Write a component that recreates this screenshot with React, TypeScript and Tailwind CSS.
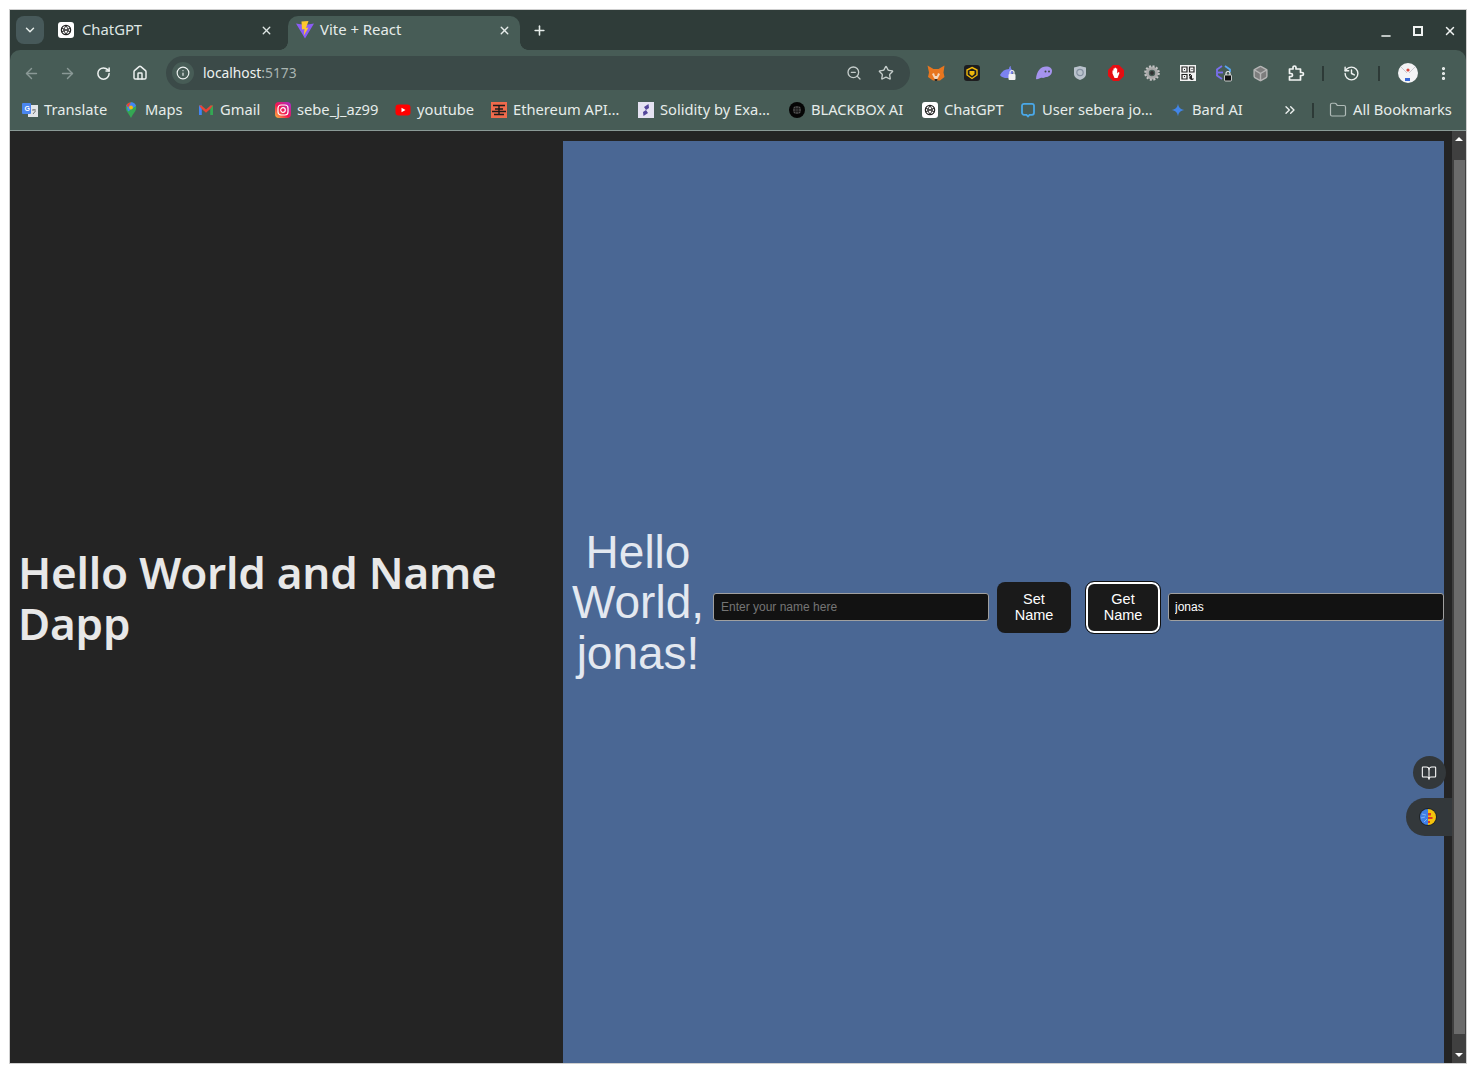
import { ArrowLeft, ArrowRight, RotateCw, Home, Info, ZoomOut, Star, History, EllipsisVertical, X, Plus, ChevronDown, ChevronsRight, Folder, Minus, BookOpen, Box } from "lucide-react";

const chromeFont = "font-['Noto_Sans',sans-serif]";

function GptIcon({ size = 16 }: { size?: number }) {
  return (
    <svg width={size} height={size} viewBox="0 0 16 16" className="shrink-0">
      <rect width="16" height="16" rx="3" fill="#fff" />
      <circle cx="8" cy="8" r="4.6" fill="none" stroke="#222" strokeWidth="1.3" />
      <path d="M8 3.4 5.5 8 8 12.6 10.5 8Z M3.6 6 12.4 10 M3.6 10 12.4 6" fill="none" stroke="#222" strokeWidth="0.9" />
    </svg>
  );
}

function ViteIcon() {
  return (
    <svg width="18" height="18" viewBox="0 0 18 18" className="shrink-0">
      <path d="M0 2.500 9 4 18 2.500 9 17.500Z" fill="#8b5cf6" />
      <path d="M5.500 0.500 12.500 0 10 7 12.500 6.500 7.800 14.500 8.500 8 6 8.500Z" fill="#fdc82c" />
    </svg>
  );
}

function Bookmark({ icon, label }: { icon: React.ReactNode; label: string }) {
  return (
    <div className="flex items-center gap-[6px] shrink-0">
      <span className="flex w-4 h-4 items-center justify-center shrink-0">{icon}</span>
      <span className="-mt-[2px] text-[14.700px] leading-none text-[#e6ecea] whitespace-nowrap">{label}</span>
    </div>
  );
}

const bookmarks: { label: string; icon: React.ReactNode; width: string }[] = [
  {
    label: "Translate",
    width: "w-[101px]",
    icon: (
      <svg width="16" height="16" viewBox="0 0 16 16">
        <rect x="6" y="3" width="10" height="12" fill="#e3e5e8" />
        <rect x="0" y="1" width="9" height="11" rx="1" fill="#4a86f0" />
        <text x="2.500" y="9" fontSize="7" fill="#fff" fontFamily="Liberation Sans" fontWeight="700">G</text>
        <path d="M10 8h4M12 7v1M11 12l2.500-3" stroke="#666" strokeWidth="0.9" fill="none" />
      </svg>
    ),
  },
  {
    label: "Maps",
    width: "w-[75px]",
    icon: (
      <svg width="16" height="16" viewBox="0 0 16 16">
        <path d="M8 16C6 11.500 2.800 9.500 2.800 5.500a5.200 5.200 0 0 1 10.400 0C13.200 9.500 10 11.500 8 16Z" fill="#34a853" />
        <path d="M3.400 3 8 .3a5.200 5.200 0 0 1 5 3.700L5 9.500Z" fill="#4285f4" />
        <path d="M3.400 3A5.200 5.200 0 0 1 8 .3L5 5.500Z" fill="#ea4335" />
        <circle cx="8" cy="5.500" r="1.900" fill="#fbbc04" />
      </svg>
    ),
  },
  {
    label: "Gmail",
    width: "w-[77px]",
    icon: (
      <svg width="16" height="16" viewBox="0 0 16 16">
        <path d="M1 3.500h2.800V13H1Z" fill="#4285f4" />
        <path d="M12.200 3.500H15V13h-2.800Z" fill="#34a853" />
        <path d="M1 3.500h2.500L8 7.500l4.500-4H15L12.200 7 8 10.800 3.800 7Z" fill="#ea4335" />
      </svg>
    ),
  },
  {
    label: "sebe_j_az99",
    width: "w-[120px]",
    icon: (
      <svg width="16" height="16" viewBox="0 0 16 16">
        <defs>
          <linearGradient id="ig" x1="0" y1="1" x2="1" y2="0">
            <stop offset="0" stopColor="#fdc13a" />
            <stop offset="0.45" stopColor="#f3154e" />
            <stop offset="1" stopColor="#a52fd0" />
          </linearGradient>
        </defs>
        <rect width="16" height="16" rx="4" fill="url(#ig)" />
        <rect x="3" y="3" width="10" height="10" rx="3" fill="none" stroke="#fff" strokeWidth="1.200" />
        <circle cx="8" cy="8" r="2.300" fill="none" stroke="#fff" strokeWidth="1.200" />
      </svg>
    ),
  },
  {
    label: "youtube",
    width: "w-[96px]",
    icon: (
      <svg width="16" height="16" viewBox="0 0 16 16">
        <rect x="0.500" y="2.500" width="15" height="11" rx="3" fill="#f00" />
        <path d="M6.500 5.700v4.600L10.500 8Z" fill="#fff" />
      </svg>
    ),
  },
  {
    label: "Ethereum API…",
    width: "w-[147px]",
    icon: (
      <svg width="16" height="16" viewBox="0 0 16 16">
        <rect width="16" height="16" fill="#ef6a4c" />
        <path d="M2 3.500h12M4 7h8M1 9.500h14M8 3.500v9M3 12.500h10" stroke="#1b1b1b" strokeWidth="1.400" fill="none" />
      </svg>
    ),
  },
  {
    label: "Solidity by Exa…",
    width: "w-[151px]",
    icon: (
      <svg width="16" height="16" viewBox="0 0 16 16">
        <rect width="16" height="16" fill="#e5e2f2" />
        <path d="M10.500 2 6 5l2 3 3-2ZM5.500 14l4.500-3-2-3-3 2Z" fill="#53459a" />
      </svg>
    ),
  },
  {
    label: "BLACKBOX AI",
    width: "w-[133px]",
    icon: (
      <svg width="16" height="16" viewBox="0 0 16 16">
        <circle cx="8" cy="8" r="8" fill="#050505" />
        <circle cx="8" cy="8" r="4" fill="#555" />
        <path d="M4 6.500h8M4 8h8M4 9.500h8M6.500 4v8M8 4v8M9.500 4v8" stroke="#111" strokeWidth="0.600" />
      </svg>
    ),
  },
  { label: "ChatGPT", width: "w-[98px]", icon: <GptIcon /> },
  {
    label: "User sebera jo…",
    width: "w-[150px]",
    icon: (
      <svg width="16" height="16" viewBox="0 0 16 16">
        <path d="M4 1.800h8A2 2 0 0 1 14 3.800v7a2 2 0 0 1-2 2H9.500L8 14.500 6.500 12.800H4a2 2 0 0 1-2-2v-7a2 2 0 0 1 2-2Z" fill="none" stroke="#4aa8e8" strokeWidth="1.800" />
      </svg>
    ),
  },
  {
    label: "Bard AI",
    width: "w-[90px]",
    icon: (
      <svg width="16" height="16" viewBox="0 0 16 16">
        <path d="M8 1.500C8.600 5.600 10.400 7.400 14.500 8 10.400 8.600 8.600 10.400 8 14.500 7.400 10.400 5.600 8.600 1.500 8 5.600 7.400 7.400 5.600 8 1.500Z" fill="#4285e8" />
      </svg>
    ),
  },
];

const extensions: React.ReactNode[] = [
  <svg key="fox" width="18" height="18" viewBox="0 0 18 18">
    <path d="M0.500 1.500 6.500 5h5l6-3.500-1 7 1 4.500-4.500 3.500h-7L1 13l1-4.500Z" fill="#e8761f" />
    <path d="M5 10l2-1 1 3h2l1-3 2 1-2 4-1.500 2h-1L7 14Z" fill="#f5d6ba" />
    <path d="M7.500 15h3l-.5 2h-2Z" fill="#2a2a2a" />
  </svg>,
  <svg key="bnb" width="16" height="16" viewBox="0 0 16 16">
    <rect width="16" height="16" rx="3" fill="#1d1d1f" />
    <path d="M8 2.500 13 5v5l-5 3.500L3 10V5Z" fill="none" stroke="#f0b90b" strokeWidth="1.400" />
    <path d="M5.500 6h5v3l-2.500 2-2.500-2Z" fill="#f0b90b" />
  </svg>,
  <svg key="lock-bird" width="18" height="18" viewBox="0 0 18 18">
    <path d="M1 11c2-4 5-6 9-6 0-2 1-3 2-3-1 2 1 3 2 6l-2 6H6C4 13 2 13 1 11Z" fill="#7c83f0" />
    <rect x="9.500" y="10" width="7" height="6" rx="1" fill="#f2f2f2" />
    <path d="M11 10V8.500a2 2 0 0 1 4 0V10" stroke="#f2f2f2" strokeWidth="1.200" fill="none" />
  </svg>,
  <svg key="ghost" width="18" height="18" viewBox="0 0 18 18">
    <path d="M1 15C1.500 7 6 2.500 11 2.500c4 0 6 2 6 4.500 0 3.500-3 6-6 6-1 0-1.500 1-3 1-1 0-1.500-.5-2.500 0-1.500.8-3 1.500-4.500 1Z" fill="#a593ee" />
    <circle cx="10.500" cy="7.500" r="1" fill="#3e4a48" />
    <circle cx="14" cy="7.500" r="1" fill="#3e4a48" />
  </svg>,
  <svg key="shield" width="16" height="16" viewBox="0 0 16 16">
    <path d="M2 2.500 8 1l6 1.500V9c0 3-3 5-6 6-3-1-6-3-6-6Z" fill="#b9c2cc" />
    <circle cx="8" cy="7.500" r="3.200" fill="none" stroke="#8490a0" strokeWidth="1.200" />
  </svg>,
  <svg key="stop" width="16" height="16" viewBox="0 0 16 16">
    <path d="M5 0h6l5 5v6l-5 5H5l-5-5V5Z" fill="#e60d12" />
    <path d="M4.500 8.500V5.500h1V8V3.500h1.200V8V2.800h1.300V8V3.500h1.200V8.500l1.300-1.500 1 .7L9.500 13H6.500Z" fill="#fff" />
  </svg>,
  <svg key="gear" width="16" height="16" viewBox="0 0 16 16">
    <circle cx="8" cy="8" r="4.800" fill="none" stroke="#a8a8a8" strokeWidth="3.200" />
    <circle cx="8" cy="8" r="6.800" fill="none" stroke="#c4c4c4" strokeWidth="2" strokeDasharray="2 1.600" />
    <circle cx="8" cy="8" r="1.900" fill="#333" />
  </svg>,
  <svg key="qr" width="16" height="16" viewBox="0 0 16 16">
    <rect width="16" height="16" fill="#f2f2f2" />
    <path d="M2 2h5v5H2ZM9.500 2h4.500v5H9.500ZM2 9.500h5V14H2Z" fill="none" stroke="#222" strokeWidth="1.200" />
    <path d="M4 4h1v1H4ZM11.500 4h1v1h-1ZM4 11h1v1H4ZM9 9h2v2H9ZM12 10a2.500 2.500 0 1 0 2 3.500h-2Z" fill="#222" />
  </svg>,
  <svg key="eth-lock" width="18" height="18" viewBox="0 0 18 18">
    <path d="M7 2 2 5.500v6L7 15" fill="none" stroke="#7a6ff0" strokeWidth="1.800" />
    <path d="M3 8.500h5" stroke="#7a6ff0" strokeWidth="1.800" />
    <path d="M10 2l5 3.500V8" fill="none" stroke="#58a6f0" strokeWidth="1.800" />
    <rect x="9.500" y="11" width="7" height="6" rx="1" fill="#111" stroke="#eee" strokeWidth="0.800" />
    <path d="M11 11V9.500a2 2 0 0 1 4 0V11" stroke="#eee" strokeWidth="1.100" fill="none" />
  </svg>,
  <Box key="box" size={17} strokeWidth={2} className="text-[#b5b5b5]" fill="#7d7d7d" />,
  // chrome's extensions button
  <svg key="puzzle" width="18" height="18" viewBox="0 0 18 18">
    <path d="M2.500 5H6V3.500a1.500 1.500 0 0 1 3 0V5h4.500v3.500H15a1.500 1.500 0 0 1 0 3h-1.500V16H2.500v-3.500H4a1.500 1.500 0 0 0 0-3H2.500Z" fill="none" stroke="#f2f5f4" strokeWidth="1.700" strokeLinejoin="round" />
  </svg>,
];

function Hairline() {
  return <div className="w-[2px] h-[15px] bg-[#2d3a37]" />;
}

export default function App() {
  return (
    <div className={`h-[1073px] w-[1476px] bg-white p-[10px] overflow-hidden ${chromeFont}`}>
      <div className="flex h-full flex-col bg-[#2f3c39] outline outline-1 outline-[#cfcfcf]">
        {/* tab strip */}
        <div className="flex h-[40px] items-end pl-[6px]">
          <div className="mb-[6px] flex h-[28px] w-[28px] items-center justify-center rounded-lg bg-[#47595a]">
            <ChevronDown size={14} strokeWidth={2.5} className="text-[#e6ecea]" />
          </div>
          <div className="mb-[6px] ml-[14px] flex h-[28px] w-[224px] items-center">
            <GptIcon />
            <span className="ml-2 -mt-[2px] text-[14.800px] text-[#dfe6e4]">ChatGPT</span>
            <X size={13} strokeWidth={2.5} className="ml-auto mr-[9px] text-[#dfe6e4]" />
          </div>
          <div className="relative ml-[6px] flex h-[34px] w-[232px] items-center rounded-t-[10px] bg-[#475c56] pl-2 pb-[6px]">
            <span className="absolute -left-2 bottom-0 h-2 w-2 bg-[radial-gradient(circle_at_0_0,#2f3c39_7.500px,#475c56_8px)]" />
            <span className="absolute -right-2 bottom-0 h-2 w-2 bg-[radial-gradient(circle_at_100%_0,#2f3c39_7.500px,#475c56_8px)]" />
            <ViteIcon />
            <span className="ml-[6px] -mt-[2px] text-[14.900px] text-[#e6ecea]">Vite + React</span>
            <X size={13} strokeWidth={2.5} className="ml-auto mr-[9px] text-[#e6ecea]" />
          </div>
          <Plus size={15} strokeWidth={2.5} className="mb-[12px] ml-[12px] text-[#e6ecea]" />
          <div className="ml-auto mb-[12px] flex items-center gap-[18px] pr-[9px] text-[#f0f3f2]">
            <Minus size={14} strokeWidth={2.5} className="translate-y-[5px]" />
            <span className="flex w-[14px] justify-center">
              <span className="h-[10px] w-[10px] border-2 border-[#f0f3f2]" />
            </span>
            <X size={14} strokeWidth={2.5} />
          </div>
        </div>

        {/* toolbar */}
        <div className="flex h-[42px] items-center rounded-t-[10px] bg-[#475c56] pl-[13px] pt-[4px]">
          <ArrowLeft size={17} className="text-[#8a9996]" />
          <ArrowRight size={17} className="ml-[19px] text-[#8a9996]" />
          <RotateCw size={15} strokeWidth={2.4} className="ml-[20px] text-[#eef2f1]" />
          <Home size={16} strokeWidth={2.2} className="ml-[21px] text-[#eef2f1]" />
          <div className="ml-[18px] flex h-[34px] w-[744px] items-center rounded-full bg-[#3b4a48] pl-[6px] pr-4">
            <span className="flex h-[22px] w-[22px] items-center justify-center rounded-full bg-[#475c56]">
              <Info size={14} strokeWidth={2} className="text-[#eef2f1]" />
            </span>
            <span className="ml-[9px] text-[13.800px] text-[#eef2f1]">
              localhost<span className="text-[#aab5b2]">:5173</span>
            </span>
            <ZoomOut size={16} strokeWidth={2} className="ml-auto text-[#c5cdcb]" />
            <Star size={16} strokeWidth={2} className="ml-[16px] text-[#c5cdcb]" />
          </div>
          <div className="ml-[8px] flex items-center">
            {extensions.map((icon, i) => (
              <span key={i} className="flex w-[36px] items-center justify-center">
                {icon}
              </span>
            ))}
          </div>
          <div className="ml-[8px]">
            <Hairline />
          </div>
          <History size={17} strokeWidth={2} className="ml-[19px] text-[#eef2f1]" />
          <div className="ml-[18px]">
            <Hairline />
          </div>
          <svg width="20" height="20" viewBox="0 0 20 20" className="ml-[18px] shrink-0">
            <circle cx="10" cy="10" r="10" fill="#f4f4f6" />
            <path d="M3 4l6 6M17 4l-6 6" stroke="#c9c9cf" strokeWidth="1" />
            <circle cx="10" cy="7" r="1.600" fill="#d6463c" />
            <rect x="7" y="15" width="5" height="3" fill="#3767d6" />
          </svg>
          <EllipsisVertical size={17} strokeWidth={2.5} className="ml-[17px] text-[#eef2f1]" />
        </div>

        {/* bookmarks bar */}
        <div className="flex h-[39px] items-center border-b border-[#8a9a96] bg-[#475c56] pl-[12px] pb-[2px]">
          {bookmarks.map((b) => (
            <div key={b.label} className={b.width}>
              <Bookmark icon={b.icon} label={b.label} />
            </div>
          ))}
          <ChevronsRight size={16} strokeWidth={2} className="ml-[22px] text-[#eef2f1]" />
          <div className="ml-[14px]">
            <Hairline />
          </div>
          <div className="ml-[15px]">
            <div className="flex items-center gap-[6px]">
              <Folder size={18} strokeWidth={1.6} className="text-[#b0bbb8]" />
              <span className="-mt-[2px] text-[14.700px] leading-none text-[#e6ecea] whitespace-nowrap">All Bookmarks</span>
            </div>
          </div>
        </div>

        {/* page */}
        <div className="relative flex min-h-0 flex-1 bg-[#242424]">
          <div className="flex w-[553px] shrink-0 items-center pl-[8px]">
            <h1 className="mt-[2px] max-w-[500px] text-[44px] font-semibold leading-[51px] tracking-[-0.2px] text-[#e8e8e8]">Hello World and Name Dapp</h1>
          </div>
          <div className="flex min-w-0 flex-1 pt-[10px]">
            <div className="flex flex-1 items-center bg-[#4a6794] font-['Liberation_Sans',sans-serif] pl-[8px]">
              <div className="mt-[1px] w-[134px] shrink-0 text-center text-[46px] leading-[50.500px] text-[#e3e8f0]">Hello World, jonas!</div>
              <input
                readOnly
                placeholder="Enter your name here"
                className="ml-[8px] mt-[9px] h-[28px] w-[276px] rounded-[3px] border border-[#a0a0a0] bg-[#121212] px-[7px] text-[12px] text-white placeholder:text-[#757575]"
              />
              <button className="ml-[8px] mt-[11px] h-[51px] w-[74px] rounded-lg bg-[#1a1a1a] px-[16px] pb-[2px] text-[14.500px] leading-[16px] text-white">Set Name</button>
              <button className="ml-[15px] mt-[11px] h-[51px] w-[74px] rounded-lg border-2 border-white bg-[#1a1a1a] px-[14px] pb-[2px] text-[14.500px] leading-[16px] text-white outline outline-1 outline-[#101010]">Get Name</button>
              <input
                readOnly
                value="jonas"
                className="ml-[8px] mt-[9px] h-[28px] w-[276px] rounded-[3px] border border-[#a0a0a0] bg-[#121212] px-[6px] text-[12px] text-white"
              />
            </div>
            <div className="w-[8px] shrink-0" />
          </div>
          {/* scrollbar */}
          <div className="flex w-[14px] shrink-0 flex-col items-center bg-[#404040]">
            <div className="mt-[6px] h-0 w-0 border-x-[4px] border-b-[4px] border-x-transparent border-b-white" />
            <div className="mt-[19px] w-[11px] flex-1 bg-[#6b6b6b]" />
            <div className="mb-[6px] mt-[19px] h-0 w-0 border-x-[4px] border-t-[4px] border-x-transparent border-t-white" />
          </div>

          {/* floating widgets */}
          <div className="absolute left-[1403px] top-[625px] flex h-[33px] w-[33px] items-center justify-center rounded-full bg-[#33383b]">
            <BookOpen size={16} strokeWidth={1.6} className="-ml-[2px] text-white" />
          </div>
          <div className="absolute left-[1396px] top-[667px] flex h-[38px] w-[46px] items-center rounded-l-full bg-[#33383b] pl-[13px]">
            <svg width="18" height="18" viewBox="0 0 18 18">
              <circle cx="9" cy="9" r="9" fill="#1e2326" />
              <path d="M9 1a8 8 0 0 0 0 16Z" fill="#3f7fe6" />
              <path d="M9 1a8 8 0 0 1 0 16Z" fill="#f4c20d" />
              <path d="M9 5h3v2.500H9ZM9 9h4.500v2H9ZM9 13h2v2H9Z" fill="#d93a2b" />
              <path d="M3 6l4 1M2 10l4-1M5 14l3-3" stroke="#8fc0f5" strokeWidth="0.800" />
            </svg>
          </div>
        </div>
      </div>
    </div>
  );
}
